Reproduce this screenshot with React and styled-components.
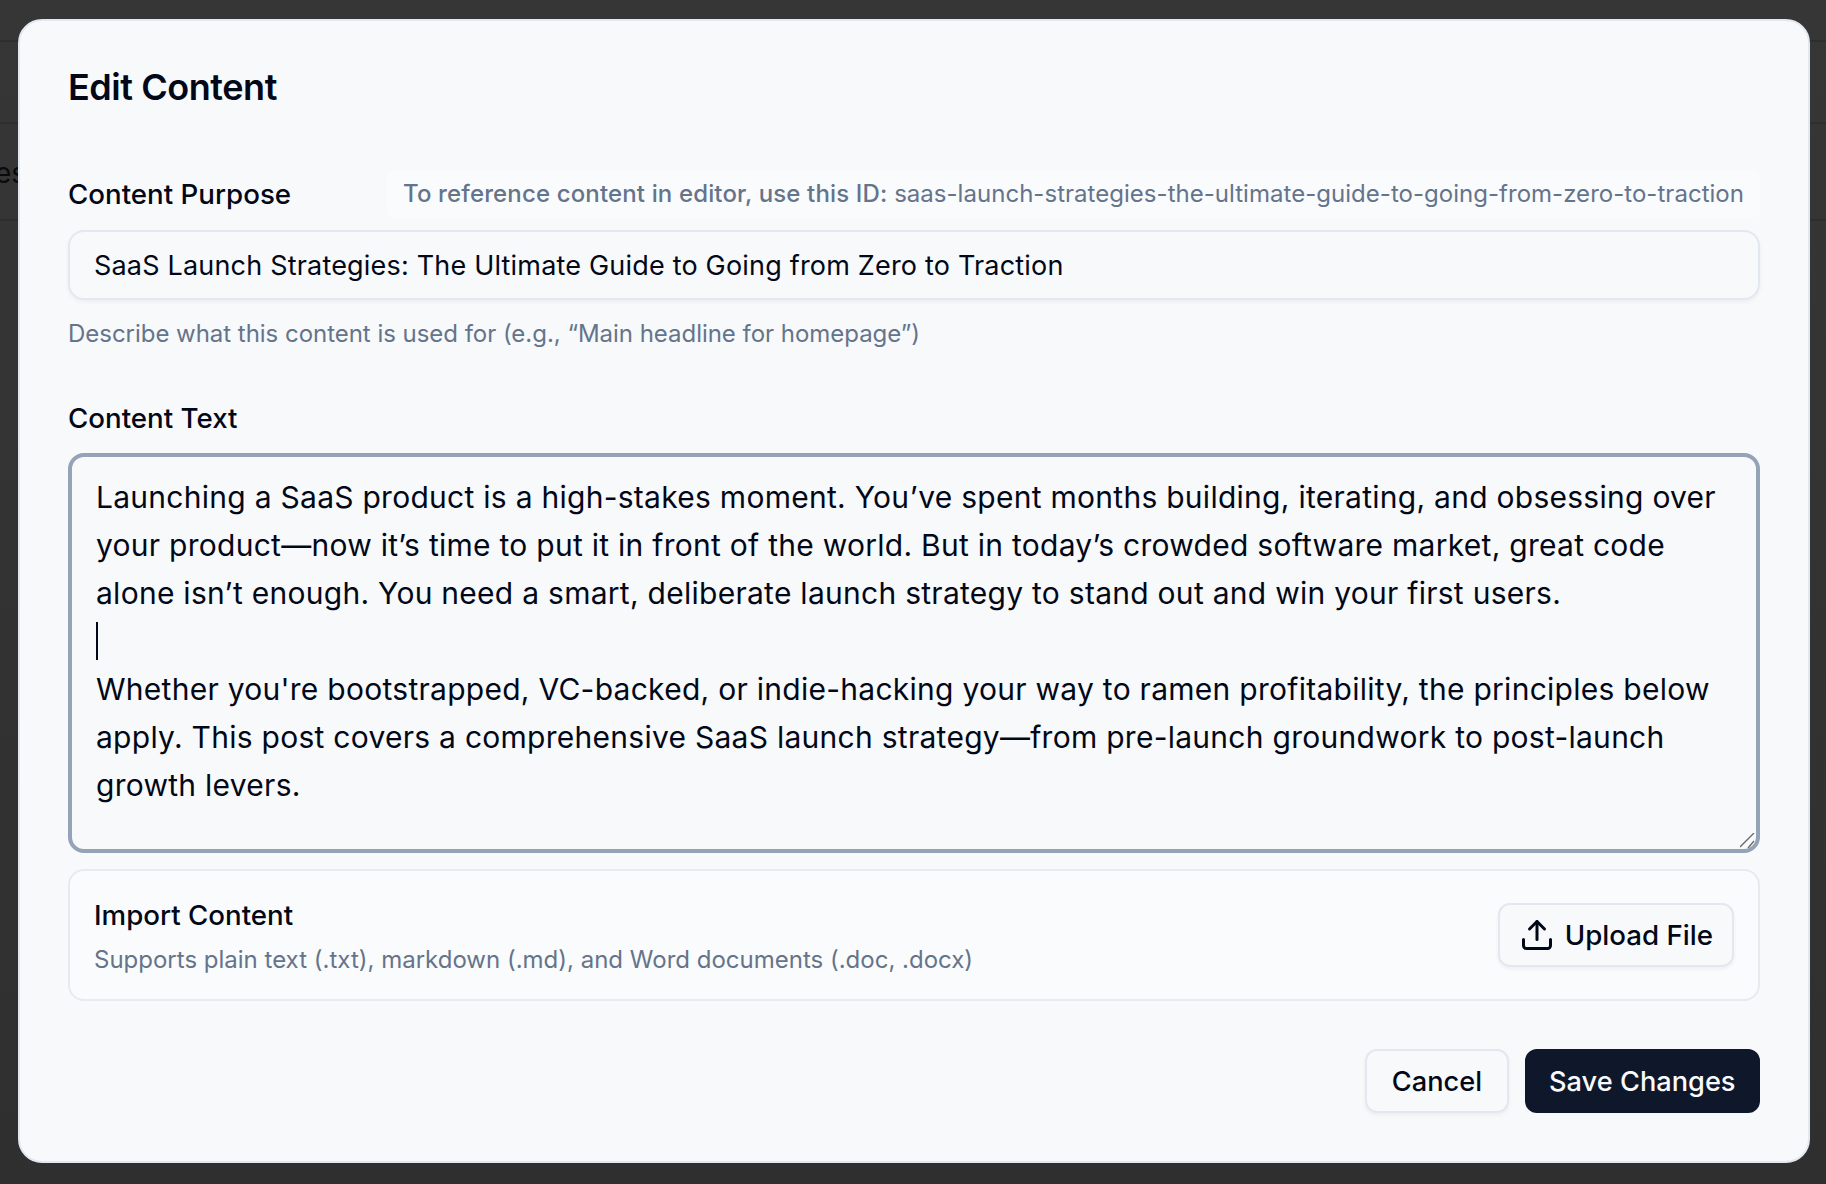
import React from 'react';
import styled, { createGlobalStyle } from 'styled-components';
import { Upload } from 'lucide-react';

const GlobalStyle = createGlobalStyle`
  * { box-sizing: border-box; }
  html, body { margin: 0; height: 100%; }
  body {
    background: linear-gradient(#363636, #2f2f2f);
    font-family: Inter, "Noto Sans", sans-serif;
    color: #020817;
    overflow: hidden;
  }
`;

const Backdrop = styled.div`
  position: relative;
  width: 1826px;
  height: 1184px;
  padding: 19px 16px 21px 18px;
`;

const BackdropRule = styled.div`
  position: absolute;
  left: 0;
  right: 0;
  top: ${({ $top }) => $top}px;
  height: 2px;
  background: #2e2e2e;
`;

const BackdropText = styled.span`
  position: absolute;
  left: -5px;
  top: 153px;
  font-size: 28px;
  line-height: 40px;
  color: #0a0a0a;
`;

const Modal = styled.div`
  position: relative;
  width: 1792px;
  height: 1144px;
  background: #f7f9fb;
  border: 2px solid #e2e8f0;
  border-radius: 24px;
  padding: 48px;
  display: flex;
  flex-direction: column;
`;

const Title = styled.h2`
  margin: 0 0 65px;
  font-size: 36px;
  line-height: 36px;
  font-weight: 600;
  letter-spacing: -0.45px;
  color: #020817;
`;

const LabelRow = styled.div`
  display: flex;
  align-items: center;
  justify-content: space-between;
  height: 48px;
  margin-bottom: 12px;
`;

const Label = styled.label`
  font-size: 27.7px;
  line-height: 40px;
  font-weight: 480;
`;

const IdChip = styled.div`
  height: 48px;
  padding: 0 16px;
  border-radius: 8px;
  background: #fafbfc;
  font-size: 24px;
  line-height: 48px;
  letter-spacing: 0.03px;
  color: #64748b;
  white-space: nowrap;
`;

const IdLead = styled.span`
  font-weight: 500;
  letter-spacing: 0.14px;
`;

const TextInput = styled.div`
  height: 70px;
  padding: 0 24px;
  border: 2px solid #e2e8f0;
  border-radius: 16px;
  box-shadow: 0 2px 4px rgba(15, 23, 42, 0.05);
  font-size: 27px;
  letter-spacing: 0.19px;
  line-height: 68px;
  white-space: nowrap;
`;

const Hint = styled.p`
  margin: ${({ $gap }) => $gap || 0}px 0 0;
  font-size: 24px;
  line-height: 32px;
  letter-spacing: ${({ $tight }) => ($tight ? '-0.03px' : '0')};
  color: #64748b;
`;

const SecondLabel = styled(Label)`
  display: block;
  margin: 48px 0 15px;
`;

const Editor = styled.div`
  position: relative;
  height: 400px;
  padding: 16px 24px;
  border: 4px solid #94a3b8;
  border-radius: 16px;
  font-size: 30px;
  letter-spacing: 0.27px;
  line-height: 48px;
  color: #020817;
`;

const Caret = styled.span`
  display: block;
  width: 2px;
  height: 38px;
  margin: 5px 0;
  background: #020817;
`;

const Grip = styled.svg`
  position: absolute;
  right: 0;
  bottom: 0;
`;

const ImportBox = styled.div`
  height: 132px;
  margin-top: 16px;
  padding: 0 24px;
  border: 2px solid #e7eaee;
  border-radius: 16px;
  background: #fafbfc;
  display: flex;
  align-items: center;
  justify-content: space-between;
`;

const ImportTitle = styled.div`
  font-size: 27.7px;
  line-height: 40px;
  font-weight: 480;
`;

const Button = styled.button`
  height: 64px;
  padding: 0 ${({ $pad }) => $pad || 24}px;
  border-radius: 12px;
  border: 2px solid ${({ $primary }) => ($primary ? '#0f172a' : '#e2e8f0')};
  background: ${({ $primary }) => ($primary ? '#0f172a' : '#f7f9fb')};
  color: ${({ $primary }) => ($primary ? '#f8fafc' : '#020817')};
  box-shadow: ${({ $primary }) => ($primary ? 'none' : '0 2px 4px rgba(15, 23, 42, 0.05)')};
  font-family: inherit;
  font-size: ${({ $size }) => $size || 27.2}px;
  font-weight: 480;
  display: inline-flex;
  align-items: center;
  gap: 10px;
`;

const Footer = styled.div`
  display: flex;
  justify-content: flex-end;
  gap: 16px;
  margin-top: 48px;
`;

export default function App() {
  return (
    <>
      <GlobalStyle />
      <Backdrop>
        <BackdropRule $top={40} />
        <BackdropRule $top={122} />
        <BackdropRule $top={219} />
        <BackdropText>es</BackdropText>
        <Modal>
          <Title>Edit Content</Title>
          <LabelRow>
            <Label>Content Purpose</Label>
            <IdChip>
              <IdLead>To reference content in editor, use this ID:</IdLead>{' '}
              saas-launch-strategies-the-ultimate-guide-to-going-from-zero-to-traction
            </IdChip>
          </LabelRow>
          <TextInput>SaaS Launch Strategies: The Ultimate Guide to Going from Zero to Traction</TextInput>
          <Hint $gap={18} $tight>Describe what this content is used for (e.g., “Main headline for homepage”)</Hint>
          <SecondLabel>Content Text</SecondLabel>
          <Editor>
            Launching a SaaS product is a high-stakes moment. You’ve spent months building, iterating, and obsessing over your product—now it’s time to put it in front of the world. But in today’s crowded software market, great code alone isn’t enough. You need a smart, deliberate launch strategy to stand out and win your first users.
            <Caret />
            Whether you're bootstrapped, VC-backed, or indie-hacking your way to ramen profitability, the principles below apply. This post covers a comprehensive SaaS launch strategy—from pre-launch groundwork to post-launch growth levers.
            <Grip width="16" height="16" viewBox="0 0 16 16">
              <path d="M0 14 L14 0 M8 15 L14 8" stroke="#6b6b6b" strokeWidth="1.4" fill="none" />
            </Grip>
          </Editor>
          <ImportBox>
            <div>
              <ImportTitle>Import Content</ImportTitle>
              <Hint $gap={9}>Supports plain text (.txt), markdown (.md), and Word documents (.doc, .docx)</Hint>
            </div>
            <Button $pad={19} $size={27.7}>
              <Upload size={36} strokeWidth={2} />
              Upload File
            </Button>
          </ImportBox>
          <Footer>
            <Button $pad={24.5}>Cancel</Button>
            <Button $pad={22.5} $primary>Save Changes</Button>
          </Footer>
        </Modal>
      </Backdrop>
    </>
  );
}
